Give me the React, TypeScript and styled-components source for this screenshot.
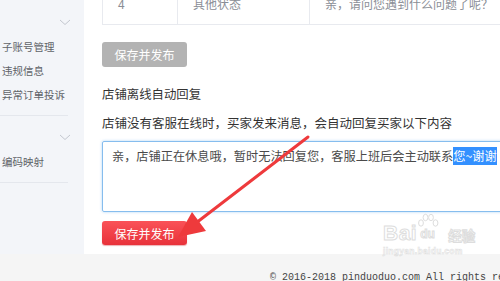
import React from "react";
import styled, { createGlobalStyle } from "styled-components";

const Global = createGlobalStyle`
  html, body { margin: 0; padding: 0; background: #fff; }
  body { width: 500px; height: 281px; overflow: hidden; font-family: "Noto Sans CJK SC", "Noto Sans", sans-serif; }
  #root { width: 500px; height: 281px; }
`;

const Page = styled.div`
  position: relative;
  width: 500px;
  height: 281px;
  overflow: hidden;
  display: flex;
  flex-direction: column;
`;

const Body = styled.div`
  display: flex;
  height: 254px;
  flex: none;
`;

const Sidebar = styled.aside`
  width: 84px;
  flex: none;
  background: #f3f5f9;
  padding-top: 1px;
  box-sizing: border-box;
`;

const Section = styled.div`
  margin-right: 16px;
  padding-bottom: 8px;
  border-bottom: 1px solid #e4e7ed;
`;

const SectionHeader = styled.div`
  height: 34px;
  box-sizing: border-box;
  padding-top: 8px;
  display: flex;
  align-items: center;
  justify-content: flex-end;
  svg { display: block; margin-right: -3px; }
`;

const NavItem = styled.div`
  height: 24px;
  line-height: 24px;
  padding-left: 2px;
  font-size: 10.5px;
  color: #5f6368;
  white-space: nowrap;
`;

const Main = styled.main`
  flex: 1;
  min-width: 0;
  overflow: hidden;
  padding-left: 18px;
  background: #fff;
`;

const Table = styled.div`
  margin-top: -18px;
  width: 460px;
  display: flex;
  height: 43px;
  border-left: 1px solid #e8eaef;
  border-bottom: 1px solid #e8eaef;
  box-sizing: border-box;
`;

const Cell = styled.div<{ $w?: number }>`
  ${(p) => (p.$w ? `width: ${p.$w}px; flex: none;` : "flex: 1;")}
  padding-left: 15px;
  border-right: 1px solid #e8eaef;
  box-sizing: border-box;
  display: flex;
  align-items: center;
  font-size: 12px;
  color: #8a8e96;
  white-space: nowrap;
`;

const Button = styled.button<{ $active?: boolean }>`
  display: block;
  width: 85px;
  height: ${(p) => (p.$active ? 24 : 25)}px;
  border: none;
  border-radius: 3px;
  padding: 0;
  font-family: "Noto Sans CJK SC", sans-serif;
  font-size: 12px;
  color: #fff;
  background: ${(p) =>
    p.$active ? "linear-gradient(#fa5258, #e8323a)" : "#b3b3b3"};
  box-shadow: ${(p) => (p.$active ? "0 1px 1px rgba(200,30,40,.35)" : "none")};
`;

const SaveTop = styled(Button)`
  margin-top: 17px;
`;

const Title = styled.div`
  margin-top: 17px;
  line-height: 20px;
  font-size: 12.4px;
  color: #333;
  white-space: nowrap;
`;

const Desc = styled.div`
  margin-top: 9px;
  line-height: 20px;
  font-size: 12.5px;
  color: #333;
  white-space: nowrap;
`;

const TextBox = styled.div`
  margin-top: 8px;
  width: 440px;
  height: 71px;
  box-sizing: border-box;
  border: 1px solid #86bdee;
  box-shadow: 0 0 3px rgba(110, 175, 235, 0.55);
  border-radius: 2px;
  padding: 6px 0 0 9px;
  font-size: 12.2px;
  line-height: 16px;
  color: #4a4a4a;
  white-space: nowrap;
`;

const Selected = styled.span`
  background: #3390ff;
  color: #fff;
`;

const SaveBottom = styled(Button)`
  margin-top: 9px;
`;

const Footer = styled.footer`
  flex: 1;
  background: #f5f5f5;
  padding: 18px 0 0 270px;
  font-family: "Liberation Mono", monospace;
  font-size: 10px;
  line-height: 12px;
  color: #444;
  white-space: nowrap;
`;

const Overlay = styled.svg`
  position: absolute;
  left: 0;
  top: 0;
  pointer-events: none;
`;

const Watermark = styled.div`
  position: absolute;
  left: 383px;
  top: 223px;
  width: 100px;
  opacity: 0.5;
  pointer-events: none;
`;

const WmRow = styled.div`
  display: flex;
  align-items: flex-end;
  font-family: "Liberation Sans", sans-serif;
  font-weight: bold;
  color: #fff;
  -webkit-text-stroke: 1px #bdbdbd;
`;

const WmBai = styled.span`
  font-size: 21px;
  line-height: 20px;
  letter-spacing: 0.5px;
`;

const WmDu = styled.span`
  position: relative;
  width: 22px;
  padding-left: 3px;
  box-sizing: border-box;
  font-size: 12px;
  line-height: 13px;
  margin-bottom: 2px;
  svg { position: absolute; left: 0; top: -15px; }
`;

const WmJy = styled.span`
  font-family: "Noto Sans CJK SC", sans-serif;
  font-size: 13.5px;
  line-height: 15px;
  margin-left: 9px;
`;

const WmUrl = styled.div`
  margin-top: 3px;
  font-family: "Liberation Sans", sans-serif;
  font-weight: bold;
  font-size: 8.5px;
  color: #fff;
  -webkit-text-stroke: 0.6px #c4c4c4;
  letter-spacing: 0.3px;
`;

const Chevron = () => (
  <svg width="12" height="7" viewBox="0 0 12 7">
    <polyline points="1,1 6,5.5 11,1" fill="none" stroke="#c3c7cf" strokeWidth="1" />
  </svg>
);

export default function App() {
  return (
    <Page>
      <Global />
      <Body>
        <Sidebar>
          <Section>
            <SectionHeader>
              <Chevron />
            </SectionHeader>
            <NavItem>子账号管理</NavItem>
            <NavItem>违规信息</NavItem>
            <NavItem>异常订单投诉</NavItem>
          </Section>
          <Section>
            <SectionHeader>
              <Chevron />
            </SectionHeader>
            <NavItem>编码映射</NavItem>
          </Section>
        </Sidebar>
        <Main>
          <Table>
            <Cell $w={75}>4</Cell>
            <Cell $w={132}>其他状态</Cell>
            <Cell>亲，请问您遇到什么问题了呢？</Cell>
          </Table>
          <SaveTop>保存并发布</SaveTop>
          <Title>店铺离线自动回复</Title>
          <Desc>店铺没有客服在线时，买家发来消息，会自动回复买家以下内容</Desc>
          <TextBox>
            亲，店铺正在休息哦，暂时无法回复您，客服上班后会主动联系<Selected>您~谢谢</Selected>
          </TextBox>
          <SaveBottom $active>保存并发布</SaveBottom>
        </Main>
      </Body>
      <Footer>© 2016-2018 pinduoduo.com All rights reserved.</Footer>

      <Watermark>
        <WmRow>
          <WmBai>Bai</WmBai>
          <WmDu>
            <svg width="22" height="16" viewBox="0 0 22 16">
              <g fill="#fff" stroke="#bdbdbd" strokeWidth="1">
                <ellipse cx="4" cy="10" rx="2.4" ry="3.2" />
                <ellipse cx="8.5" cy="4.5" rx="2.4" ry="3.2" />
                <ellipse cx="14" cy="4.5" rx="2.4" ry="3.2" />
                <ellipse cx="18.5" cy="10" rx="2.4" ry="3.2" />
              </g>
            </svg>
            du
          </WmDu>
          <WmJy>经验</WmJy>
        </WmRow>
        <WmUrl>jingyan.baidu.com</WmUrl>
      </Watermark>

      <Overlay width="500" height="281" viewBox="0 0 500 281">
        <line x1="308" y1="137" x2="196" y2="223" stroke="#ee3a3c" strokeWidth="3" strokeLinecap="round" />
        <polygon points="178,237 192,212 206,231" fill="#ee3a3c" />
      </Overlay>
    </Page>
  );
}
